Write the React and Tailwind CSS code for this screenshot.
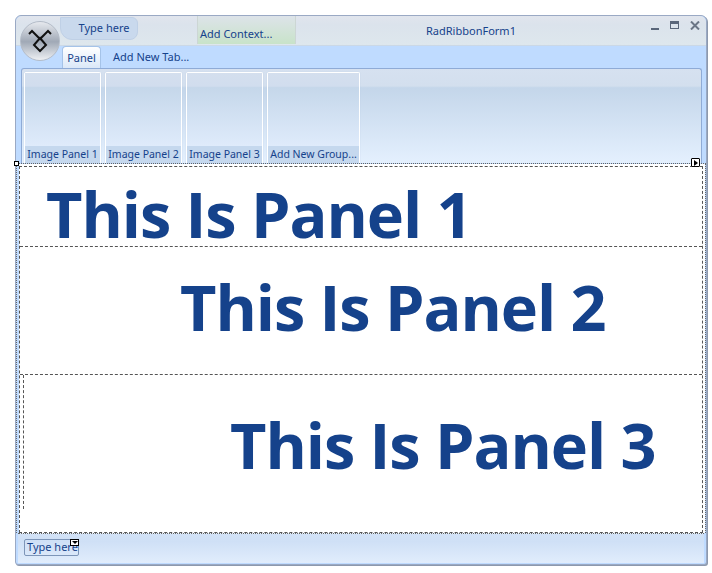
import React from "react";

const groups = [
  { name: "Image Panel 1", width: "w-[77px]" },
  { name: "Image Panel 2", width: "w-[77px]" },
  { name: "Image Panel 3", width: "w-[77px]" },
  { name: "Add New Group...", width: "w-[93px]" },
];

const RibbonGroup = ({ name, width }) => (
  <div className={`${width} h-[91px] flex flex-col border border-white border-b-0 rounded-t-[2px] shadow-[0_0_1px_#a9bfdc]`}>
    <div className="h-[73px] bg-[linear-gradient(#d4dfee_0%,#d1ddee_18%,#c5d7ea_20%,#dfebfb_100%)]" />
    <div className="h-[17px] bg-[#c5d8ee] text-[10.5px] leading-[16px] text-[#15428b] text-center whitespace-nowrap overflow-hidden">
      {name}
    </div>
  </div>
);

const Orb = () => (
  <div className="absolute left-[4px] top-[5px] w-[40px] h-[40px] rounded-full border border-[#b4bcc8] bg-gradient-to-b from-[#e6e9ee] via-[#a0a9b6] via-[52%] to-[#eef0f3] flex items-center justify-center">
    <svg width="24" height="24" viewBox="0 0 24 24" fill="none" stroke="#111" strokeWidth="2">
      <path d="M1 5 L4 2 L12 10 L20 2 L23 5" />
      <path d="M12 9 L18 16 L12 22 L6 16 Z" />
    </svg>
  </div>
);

const App = () => (
  <div className="w-[712px] h-[573px] bg-white pt-[15px] pl-[15px] overflow-hidden font-['Noto_Sans',sans-serif]">
    <div className="relative w-[692px] h-[550px] flex flex-col border border-[#9aa9c4] rounded-t-[6px] rounded-b-[3px] bg-[#bfdbff] shadow-[1px_1px_0_#8d99ad]">
      {/* title bar */}
      <div className="h-[30px] shrink-0 flex rounded-t-[6px] border-b border-[#cbd8e6] bg-gradient-to-b from-[#e1e5ed] via-[#dbe3ec] via-[30%] to-[#dee7ed]">
        <div className="ml-[44px] mt-[1px] w-[78px] h-[23px] bg-[#c9d9ed] border border-[#bfd0e6] rounded-br-[8px] rounded-tr-[6px] rounded-bl-[12px] text-[11px] leading-[20px] text-[#15428b] text-center pl-[10px]">
          Type here
        </div>
        <div className="ml-[59px] w-[99px] h-[28px] bg-gradient-to-b from-[#dde3e9] to-[#c8e3c9] border-x border-[#ccd6d4] text-[11px] leading-[16px] pt-[10px] pl-[2px] text-[#15428b]">
          Add Context...
        </div>
        <div className="ml-[130px] mt-[7px] text-[11px] leading-[16px] text-[#15428b]">RadRibbonForm1</div>
        <div className="ml-auto mr-[6px] mt-[5px] flex items-start gap-[11px]">
          <div className="mt-[7px] w-[8px] h-[2px] bg-[#59667a]" />
          <div className="w-[9px] h-[8px] border border-[#59667a] border-t-[3px]" />
          <svg width="10" height="9" viewBox="0 0 10 9" stroke="#6b7686" strokeWidth="2" fill="none">
            <path d="M1 0.5 L9 8.5 M9 0.5 L1 8.5" />
          </svg>
        </div>
      </div>

      <Orb />

      {/* tabs */}
      <div className="h-[22px] shrink-0 flex items-end pl-[46px] text-[11px] text-[#15428b]">
        <div className="w-[39px] h-[22px] rounded-t-[4px] border border-b-0 border-[#a5c3e8] bg-gradient-to-b from-white to-[#dbe8f8] text-center leading-[21px]">
          Panel
        </div>
        <div className="ml-[12px] h-[22px] leading-[21px]">Add New Tab...</div>
      </div>

      {/* ribbon body */}
      <div className="ml-[5px] mr-[4px] h-[95px] shrink-0 flex gap-[4px] pl-[2px] pt-[3px] rounded-t-[3px] border border-b-0 border-[#8fabd6] bg-[linear-gradient(#d6e1f0_0%,#d3dfee_18%,#c4d6ea_20%,#e4f0fe_100%)]">
        {groups.map((group, index) => (
          <RibbonGroup key={index} name={group.name} width={group.width} />
        ))}
      </div>

      {/* form surface */}
      <div className="relative h-[370px] shrink-0 flex flex-col border-x border-t border-dotted border-[#666] text-[#15428b] font-['Open_Sans',sans-serif] font-bold text-[63px] tracking-[-1.05px] leading-none whitespace-nowrap">
        <div className="flex-1 ml-[2px] bg-white pt-[2px] pr-[2px] flex flex-col">
          <div className="flex-1 flex flex-col border border-dashed border-[#555]">
            <div className="h-[80px] pl-[26px] pt-[15px] border-b border-dashed border-[#555]">This Is Panel 1</div>
            <div className="h-[128px] pl-[160px] pt-[28px] border-b border-dashed border-[#555]">This Is Panel 2</div>
            <div className="ml-[3px] h-[134px] pl-[206px] pt-[38px] border-l border-dashed border-[#555]">This Is Panel 3</div>
          </div>
        </div>
        {/* selection handles */}
        <div className="absolute -left-[3px] -top-[3px] w-[5px] h-[5px] bg-white border border-black" />
        <div className="absolute right-[5px] -top-[6px] w-[9px] h-[9px] bg-white border border-black rounded-[1px] flex items-center justify-center">
          <div className="w-0 h-0 border-y-[3px] border-y-transparent border-l-[4px] border-l-black" />
        </div>
      </div>

      {/* status bar */}
      <div className="relative flex-1 mx-[2px] mb-[1px] border-t border-dotted border-[#666] bg-gradient-to-b from-[#d3e2f6] via-[#cfe0f6] via-[25%] to-[#e1edfc] pl-[6px] pt-[5px]">
        <div className="relative w-[55px] h-[17px] border border-[#7d95b8] rounded-[2px] text-[11px] leading-[14px] text-[#15428b] pl-[2px] whitespace-nowrap">
          Type here
          <div className="absolute -right-[1px] -top-[1px] w-[9px] h-[7px] bg-white border border-black flex flex-col items-center justify-center">
            <div className="w-0 h-0 border-x-[3px] border-x-transparent border-t-[3px] border-t-black" />
          </div>
        </div>
      </div>
    </div>
  </div>
);

export default App;
